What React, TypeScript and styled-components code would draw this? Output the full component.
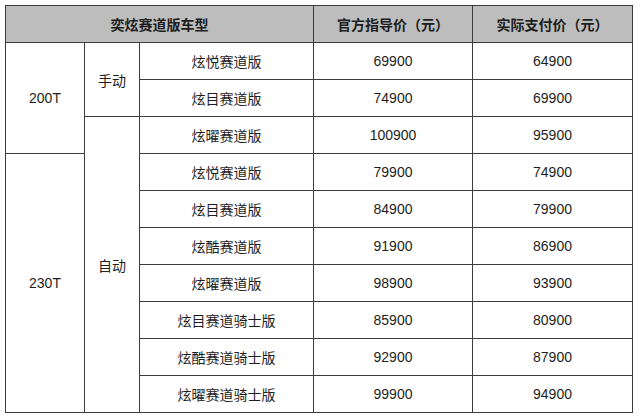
import React from 'react';
import styled, { createGlobalStyle } from 'styled-components';

const Global = createGlobalStyle`
  html, body {
    margin: 0;
    padding: 0;
    background: #ffffff;
  }
`;

type Row = { engine?: [string, number]; gear?: [string, number]; model: string; guide: string; paid: string };

const rows: Row[] = [
  { engine: ['200T', 3], gear: ['手动', 2], model: '炫悦赛道版', guide: '69900', paid: '64900' },
  { model: '炫目赛道版', guide: '74900', paid: '69900' },
  { gear: ['自动', 8], model: '炫曜赛道版', guide: '100900', paid: '95900' },
  { engine: ['230T', 7], model: '炫悦赛道版', guide: '79900', paid: '74900' },
  { model: '炫目赛道版', guide: '84900', paid: '79900' },
  { model: '炫酷赛道版', guide: '91900', paid: '86900' },
  { model: '炫曜赛道版', guide: '98900', paid: '93900' },
  { model: '炫目赛道骑士版', guide: '85900', paid: '80900' },
  { model: '炫酷赛道骑士版', guide: '92900', paid: '87900' },
  { model: '炫曜赛道骑士版', guide: '99900', paid: '94900' },
];

const Page = styled.div`
  padding: 5px 0 0 5px;
`;

const Table = styled.table`
  border-collapse: collapse;
  table-layout: fixed;
  width: 627px;
  font-family: "Liberation Sans", "Noto Sans CJK SC", sans-serif;
  color: #1e1e1e;
`;

const HeadCell = styled.th`
  height: 36px;
  padding: 0;
  background: #bdbdbd;
  border: 1.5px solid #3c3c3c;
  font-size: 14px;
  font-weight: 700;
  text-align: center;
  vertical-align: middle;
`;

const Cell = styled.td`
  height: 36px;
  padding: 0;
  border: 1.5px solid #3c3c3c;
  font-size: 14px;
  text-align: center;
  vertical-align: middle;
  background: #ffffff;
`;

export default function App() {
  return (
    <Page>
      <Global />
      <Table>
        <colgroup>
          <col style={{ width: 79 }} />
          <col style={{ width: 55 }} />
          <col style={{ width: 174 }} />
          <col style={{ width: 159 }} />
          <col style={{ width: 160 }} />
        </colgroup>
        <thead>
          <tr>
            <HeadCell colSpan={3}>奕炫赛道版车型</HeadCell>
            <HeadCell>官方指导价（元）</HeadCell>
            <HeadCell>实际支付价（元）</HeadCell>
          </tr>
        </thead>
        <tbody>
          {rows.map((r, i) => (
            <tr key={i}>
              {r.engine && <Cell rowSpan={r.engine[1]}>{r.engine[0]}</Cell>}
              {r.gear && <Cell rowSpan={r.gear[1]}>{r.gear[0]}</Cell>}
              <Cell>{r.model}</Cell>
              <Cell>{r.guide}</Cell>
              <Cell>{r.paid}</Cell>
            </tr>
          ))}
        </tbody>
      </Table>
    </Page>
  );
}
